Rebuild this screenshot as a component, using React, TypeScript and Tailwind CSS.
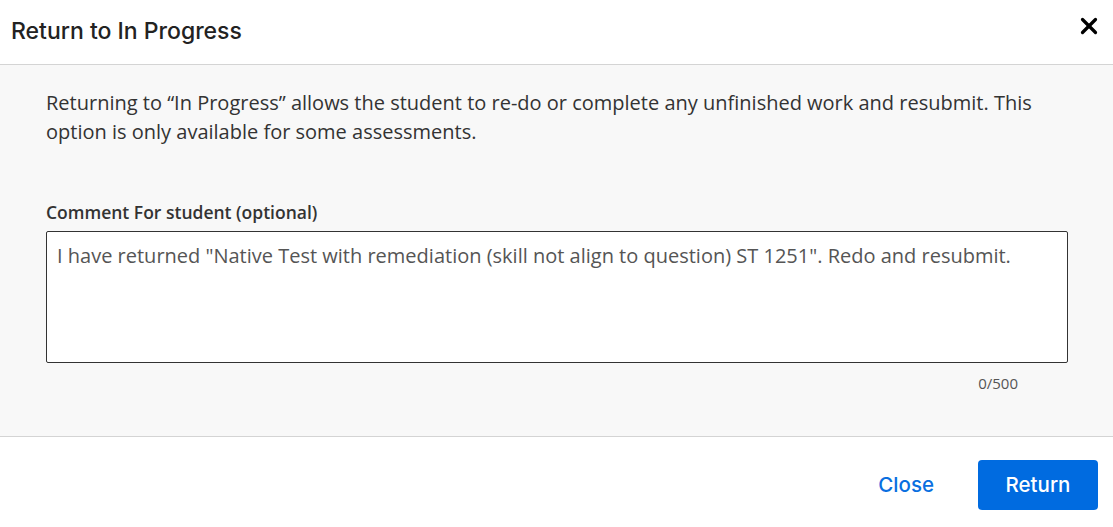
import { X } from 'lucide-react'

const body = { fontFamily: '"Open Sans", "Noto Sans", sans-serif' }
const head = { fontFamily: 'Inter, "Noto Sans", sans-serif' }

export default function App() {
    const comment = 'I have returned "Native Test with remediation (skill not align to question) ST 1251". Redo and resubmit.'

    return (
        <div className="w-[1113px] h-[527px] bg-white flex flex-col" style={body}>
            <div className="h-[65px] flex items-center justify-between border-b border-[#d4d4d4] pl-[11px] pr-[11px] shrink-0">
                <h2 className="text-[23px] font-medium text-[#222] mb-[2px]" style={head}>Return to In Progress</h2>
                <button className="w-[26px] h-[26px] mb-[12px] flex items-center justify-center text-black">
                    <X size={26} strokeWidth={3} />
                </button>
            </div>

            <div className="bg-[#f8f8f8] border-b border-[#d4d4d4] px-[46px] pt-[23px] pb-[43px] shrink-0">
                <p className="text-[20px] leading-[29px] text-[#333]">
                    Returning to “In Progress” allows the student to re-do or complete any unfinished work and resubmit. This option is only available for some assessments.
                </p>

                <label className="block mt-[54px] text-[17.5px] leading-[24px] font-semibold text-[#333]">Comment For student (optional)</label>
                <textarea
                    defaultValue={comment}
                    className="mt-[7px] block w-[1022px] h-[132px] bg-white border border-[#333] rounded-[2px] px-[10px] pt-[11px] pb-[10px] text-[20px] leading-[26px] text-[#555] resize-none outline-none"
                />
                <div className="w-[972px] text-right mt-[10px] text-[15px] leading-[20px] text-[#555]">0/500</div>
            </div>

            <div className="flex-1 flex items-start justify-end pt-[23px] pr-[15px] gap-[22px]" style={head}>
                <button className="h-[50px] px-[22px] text-[20.5px] font-medium text-[#0a6fe0]">Close</button>
                <button className="h-[50px] w-[120px] rounded-[4px] bg-[#006be0] text-white text-[20.5px] font-medium">Return</button>
            </div>
        </div>
    )
}
